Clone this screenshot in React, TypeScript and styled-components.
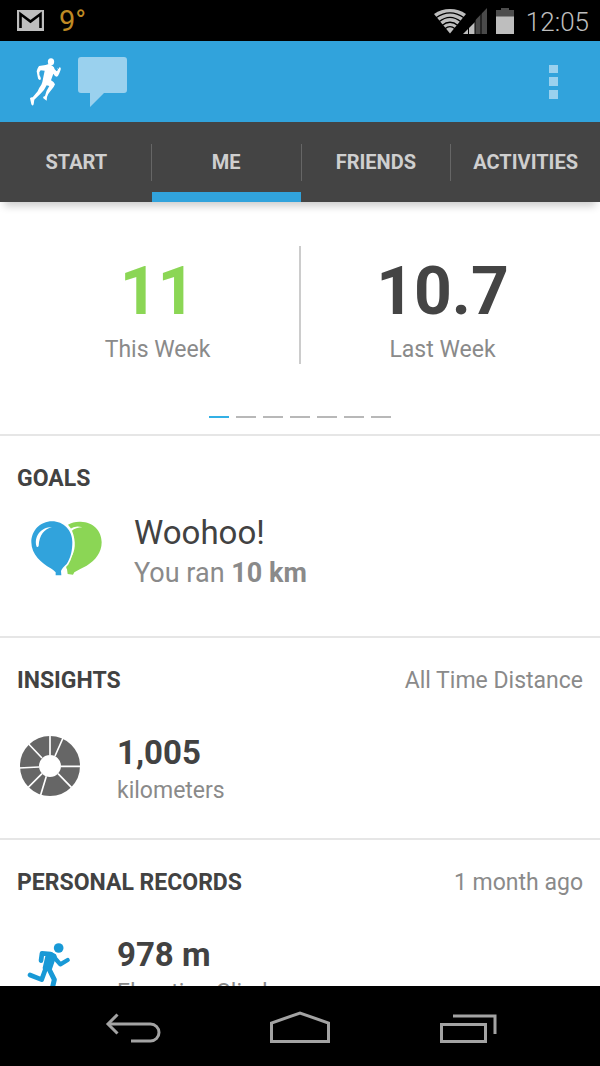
import React from "react";
import styled, { createGlobalStyle } from "styled-components";

const GlobalStyle = createGlobalStyle`
  *, *::before, *::after { box-sizing: border-box; }
  body { margin: 0; background: #fff; font-family: Roboto, "Liberation Sans", sans-serif; color: #424242; }
  h1, h2, p { margin: 0; }
  svg { display: block; }
  button { border: 0; margin: 0; padding: 0; background: none; color: inherit; font: inherit; cursor: pointer; }
`;

const Screen = styled.div`
  display: flex;
  flex-direction: column;
  height: 100vh;
`;

const StatusBar = styled.div`
  flex: none;
  display: flex;
  align-items: center;
  justify-content: space-between;
  height: 41px;
  padding: 0 11px 0 17px;
  background: #000;
`;

const StatusGroup = styled.div<{ $gap: number }>`
  display: flex;
  align-items: center;
  gap: ${(p) => p.$gap}px;
`;

const Temperature = styled.span`
  padding-top: 2px;
  color: #bf8a24;
  font-size: 29px;
  line-height: 39px;
`;

const Clock = styled.time`
  padding-left: 3px;
  padding-top: 3px;
  color: #bebebe;
  font-size: 26px;
  font-weight: 300;
  line-height: 38px;
`;

const AppBar = styled.header`
  flex: none;
  display: flex;
  align-items: center;
  gap: 14px;
  height: 81px;
  padding: 0 36px 0 28px;
  background: #31a3dc;
`;

const BarButton = styled.button<{ $end?: boolean }>`
  display: grid;
  place-items: center;
  height: 80px;
  margin-left: ${(p) => (p.$end ? "auto" : "0")};
  padding: 0 ${(p) => (p.$end ? 6 : 0)}px;
`;

const Tabs = styled.nav`
  flex: none;
  display: flex;
  align-items: stretch;
  height: 80px;
  padding-left: 2px;
  background: #444;
  box-shadow: 0 8px 8px -4px rgba(0, 0, 0, 0.2);
`;

const TabDivider = styled.span`
  flex: none;
  align-self: center;
  width: 1px;
  height: 37px;
  background: #666;
`;

const Tab = styled.button<{ $active?: boolean }>`
  flex: 1 1 0;
  min-width: 0;
  border-top: 10px solid transparent;
  border-bottom: 10px solid ${(p) => (p.$active ? "#31a3dc" : "transparent")};
  color: #cfcfcf;
  font-size: 20px;
  font-weight: 700;
  line-height: 24px;
`;

const Feed = styled.main`
  flex: 1 1 0;
  min-height: 0;
  overflow-y: auto;
  scrollbar-width: none;
  &::-webkit-scrollbar { display: none; }
`;

const Summary = styled.section`
  padding: 44px 16px 16px;
  border-bottom: 2px solid #e6e6e6;
`;

const SummaryRow = styled.div`
  display: flex;
  height: 118px;
`;

const SummaryDivider = styled.span`
  width: 2px;
  background: #ccc;
`;

const Stat = styled.div`
  flex: 1 1 0;
  text-align: center;
`;

const StatValue = styled.p<{ $color: string }>`
  padding-top: 10px;
  color: ${(p) => p.$color};
  font-size: 66px;
  font-weight: 700;
  line-height: 72px;
`;

const StatLabel = styled.p`
  padding-top: 8px;
  color: #8a8a8a;
  font-size: 23px;
  line-height: 28px;
`;

const Pager = styled.div`
  display: flex;
  justify-content: center;
  gap: 7px;
  padding: 52px 0 0;
`;

const PagerMark = styled.button<{ $active?: boolean }>`
  width: 20px;
  height: 2px;
  background: ${(p) => (p.$active ? "#33b0e5" : "#b8b8b8")};
`;

const Card = styled.section`
  height: 202px;
  padding: 29px 17px 0;
  border-bottom: 2px solid #e6e6e6;
`;

const CardHeader = styled.div`
  display: flex;
  justify-content: space-between;
  align-items: center;
`;

const CardTitle = styled.h2`
  font-size: 23px;
  font-weight: 700;
  line-height: 28px;
`;

const CardNote = styled.span`
  color: #8a8a8a;
  font-size: 23px;
  line-height: 28px;
`;

const CardBody = styled.div<{ $wide?: boolean }>`
  display: grid;
  grid-template-columns: ${(p) => (p.$wide ? 117 : 100)}px 1fr;
  padding-top: ${(p) => (p.$wide ? 20 : 38)}px;
`;

const CardIcon = styled.div<{ $left: number; $top: number }>`
  padding: ${(p) => p.$top}px 0 0 ${(p) => p.$left}px;
`;

const Headline = styled.p<{ $light?: boolean }>`
  font-size: 33px;
  font-weight: ${(p) => (p.$light ? 400 : 700)};
  line-height: 40px;
`;

const Detail = styled.p<{ $large?: boolean }>`
  color: #8a8a8a;
  font-size: ${(p) => (p.$large ? 27 : 23)}px;
  line-height: ${(p) => (p.$large ? 40 : 36)}px;
`;

const NavBar = styled.nav`
  flex: none;
  display: flex;
  justify-content: center;
  height: 80px;
  background: #000;
`;

const NavButton = styled.button`
  display: grid;
  place-items: center;
  flex: 0 1 168px;
  padding-top: 2px;
`;

const MailIcon = () => (
  <svg width="27" height="21" viewBox="0 0 27 21" aria-label="Mail">
    <path d="M0 0H27V21H0Z" fill="#bebebe" />
    <path d="M3.500 18V4L13.500 11.500L23.500 4V18" fill="none" stroke="#000" strokeWidth="2.600" />
  </svg>
);

const NetworkIcon = () => (
  <svg width="53" height="26" viewBox="0 0 53 26" aria-label="Wi-Fi and mobile signal">
    <path d="M16 25.500L0 6Q7 1 16 1T32 6Z" fill="#bebebe" />
    <g fill="none" stroke="#000" strokeWidth="1.300">
      <path d="M2 9.800Q16 0 30 9.800" />
      <path d="M5 13.800Q16 5 27 13.800" />
      <path d="M8 17.500Q16 11 24 17.500" />
      <path d="M11 20.800Q16 16.500 21 20.800" />
    </g>
    <g transform="translate(29 0)">
      <path d="M0 26L12 14V26Z" fill="#bebebe" />
      <path d="M12 26V12.500L24 0V26Z" fill="#4a4a4a" />
      <path d="M5.500 12V26M12 8V26M18 4V26" stroke="#000" strokeWidth="1" />
    </g>
  </svg>
);

const BatteryIcon = () => (
  <svg width="18" height="26" viewBox="0 0 18 26" aria-label="Battery">
    <path d="M5 0H13V2H18V9H0V2H5Z" fill="#4d4d4d" />
    <path d="M0 8.500H18V26H0Z" fill="#bebebe" />
  </svg>
);

const SprinterIcon = () => (
  <svg width="36" height="50" viewBox="84 170 108 150">
    <g fill="#fff">
      <ellipse cx="153" cy="184" rx="9.500" ry="10.500" />
      <path d="M146 191L157 196Q163 200 164 207L170 213L174 209L172 203L176 206L179 200Q184 202 182 208L178 219Q175 228 170 229Q164 228 160 220L153 240Q164 246 165 252Q162 262 152 271Q143 281 141 290L140 301L132 295Q128 293 130 289L135 287Q137 273 148 257L140 255Q133 270 123 279L103 298L101 312Q98 319 94 312L90 294Q93 290 98 291L113 273Q117 262 124 253Q128 244 129 235L134 211L122 210L118 216Q117 224 121 229Q125 237 119 239Q113 236 113 229L110 213Q111 207 115 200Q116 196 122 196L137 194Z" />
    </g>
  </svg>
);

const ChatIcon = () => (
  <svg width="49" height="50" viewBox="0 0 49 50">
    <path d="M3 0H46Q49 0 49 3V33Q49 36 46 36H26L12 50V36H3Q0 36 0 33V3Q0 0 3 0Z" fill="#9ad1ee" />
  </svg>
);

const MoreIcon = () => (
  <svg width="9" height="34" viewBox="0 0 9 34" fill="#9ad1ee">
    <path d="M0 0H9V8H0ZM0 12H9V21H0ZM0 25H9V34H0Z" />
  </svg>
);

const BalloonsIcon = () => (
  <svg width="72" height="56" viewBox="94 61 216 168">
    <path d="M205 72Q221 62 243 63C280 64 306 90 306 125C306 155 287 180 261 195Q238 206 224 215L220 222L204 220L202 206Q196 199 204 187C220 165 229 145 224 115Q220 88 205 72Z" fill="#8bd655" />
    <path d="M211 85Q227 73 248 80Q228 80 216 91Z" fill="#fff" />
    <path d="M157 62C122 62 95 90 95 125C95 161 126 188 153 203Q163 209 168 215L168 224L185 224L184 211Q187 202 201 190C214 169 218 149 218 124C218 89 192 62 157 62Z" fill="#31a3dc" stroke="#fff" strokeWidth="10" paintOrder="stroke" />
    <path d="M111 138C102 109 122 80 157 79C134 86 119 102 117 136Q114 141 111 138Z" fill="#fff" />
  </svg>
);

const WheelIcon = () => (
  <svg width="62" height="62" viewBox="57 45 186 186">
    <circle cx="150" cy="138" r="61.500" fill="none" stroke="#666" strokeWidth="57" />
    <path d="M150 105V44M165 108L189 54M183 139H244M174 161L215 203M139 169L121 228M126 161L84 203M117 141L56 144M126 114L86 72" stroke="#fff" strokeWidth="5" />
  </svg>
);

const RunnerIcon = () => (
  <svg width="44" height="58" viewBox="82 66 132 174" fill="none" stroke="#1899d6" strokeLinecap="round" strokeLinejoin="round">
    <circle cx="177" cy="84" r="14.500" fill="#1899d6" stroke="none" />
    <path d="M124 122L127 100L153 102L164 110" strokeWidth="14" />
    <path d="M160 108L182 133L204 120" strokeWidth="13" />
    <path d="M146 105L162 108L150 143L137 144Z" fill="#1899d6" strokeWidth="16" />
    <path d="M138 146L126 179L91 165" strokeWidth="14" />
    <path d="M148 147L164 179L155 217" strokeWidth="15" />
  </svg>
);

const BackIcon = () => (
  <svg width="60" height="32" viewBox="-3 0 60 32" fill="none" stroke="#a3a3a3" strokeWidth="3">
    <path d="M3 13H45.500A8.500 8.500 0 0 1 45.500 30H26" />
    <path d="M12.500 3.500L3 13L12.500 22.500" />
  </svg>
);

const HomeIcon = () => (
  <svg width="60" height="32" viewBox="0 0 60 32" fill="none" stroke="#a3a3a3" strokeWidth="3">
    <path d="M1.500 30.500V12L30 2L58.500 12V30.500Z" />
  </svg>
);

const RecentsIcon = () => (
  <svg width="57" height="32" viewBox="0 0 57 32" fill="none" stroke="#a3a3a3" strokeWidth="3">
    <path d="M1.500 13.500H45.500V30.500H1.500Z" />
    <path d="M13 5H55V23" />
  </svg>
);

const tabs = ["START", "ME", "FRIENDS", "ACTIVITIES"];
const pages = [1, 2, 3, 4, 5, 6, 7];

export default function App() {
  return (
    <Screen>
      <GlobalStyle />
      <StatusBar>
        <StatusGroup $gap={15}>
          <MailIcon />
          <Temperature>9°</Temperature>
        </StatusGroup>
        <StatusGroup $gap={9}>
          <NetworkIcon />
          <BatteryIcon />
          <Clock>12:05</Clock>
        </StatusGroup>
      </StatusBar>
      <AppBar>
        <BarButton aria-label="Home">
          <SprinterIcon />
        </BarButton>
        <BarButton aria-label="Messages">
          <ChatIcon />
        </BarButton>
        <BarButton $end aria-label="More options">
          <MoreIcon />
        </BarButton>
      </AppBar>
      <Tabs>
        {tabs.map((name, i) => (
          <React.Fragment key={name}>
            {i > 0 && <TabDivider />}
            <Tab $active={name === "ME"}>{name}</Tab>
          </React.Fragment>
        ))}
      </Tabs>
      <Feed>
        <Summary>
          <SummaryRow>
            <Stat>
              <StatValue $color="#8bd655">11</StatValue>
              <StatLabel>This Week</StatLabel>
            </Stat>
            <SummaryDivider />
            <Stat>
              <StatValue $color="#444">10.7</StatValue>
              <StatLabel>Last Week</StatLabel>
            </Stat>
          </SummaryRow>
          <Pager>
            {pages.map((n) => (
              <PagerMark key={n} $active={n === 1} aria-label={`Page ${n}`} />
            ))}
          </Pager>
        </Summary>
        <Card>
          <CardHeader>
            <CardTitle>GOALS</CardTitle>
          </CardHeader>
          <CardBody $wide>
            <CardIcon $left={14} $top={8}>
              <BalloonsIcon />
            </CardIcon>
            <div>
              <Headline $light>Woohoo!</Headline>
              <Detail $large>
                You ran <b>10 km</b>
              </Detail>
            </div>
          </CardBody>
        </Card>
        <Card>
          <CardHeader>
            <CardTitle>INSIGHTS</CardTitle>
            <CardNote>All Time Distance</CardNote>
          </CardHeader>
          <CardBody>
            <CardIcon $left={2} $top={2}>
              <WheelIcon />
            </CardIcon>
            <div>
              <Headline>1,005</Headline>
              <Detail>kilometers</Detail>
            </div>
          </CardBody>
        </Card>
        <Card>
          <CardHeader>
            <CardTitle>PERSONAL RECORDS</CardTitle>
            <CardNote>1 month ago</CardNote>
          </CardHeader>
          <CardBody>
            <CardIcon $left={10} $top={7}>
              <RunnerIcon />
            </CardIcon>
            <div>
              <Headline>978 m</Headline>
              <Detail>Elevation Climb</Detail>
            </div>
          </CardBody>
        </Card>
      </Feed>
      <NavBar>
        <NavButton aria-label="Back">
          <BackIcon />
        </NavButton>
        <NavButton aria-label="Home screen">
          <HomeIcon />
        </NavButton>
        <NavButton aria-label="Recent apps">
          <RecentsIcon />
        </NavButton>
      </NavBar>
    </Screen>
  );
}
